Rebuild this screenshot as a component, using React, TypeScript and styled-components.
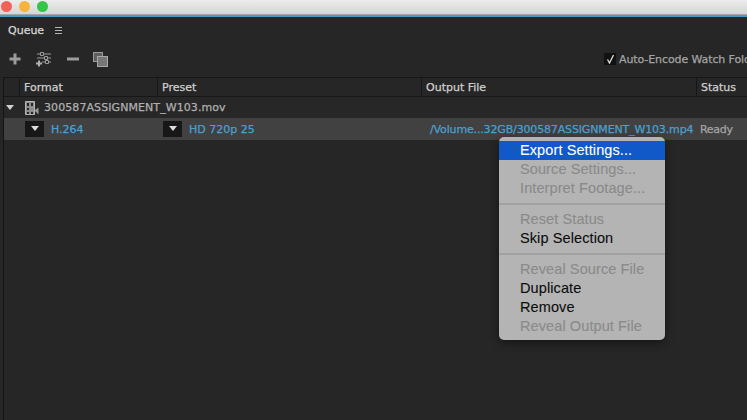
import React from 'react'
import styled, { createGlobalStyle } from 'styled-components'

const GlobalStyle = createGlobalStyle`
  html, body {
    margin: 0;
    padding: 0;
    background: #262626;
    overflow: hidden;
  }
  * {
    box-sizing: border-box;
  }
`

const Window = styled.div`
  position: relative;
  width: 747px;
  height: 420px;
  overflow: hidden;
  display: flex;
  flex-direction: column;
  background: #262626;
  font-family: 'DejaVu Sans', 'Liberation Sans', sans-serif;
  -webkit-text-stroke: 0.25px currentColor;
`

const TitleBar = styled.div`
  flex: 0 0 15px;
  display: flex;
  align-items: flex-start;
  gap: 7px;
  padding: 1px 0 0 1px;
  background: linear-gradient(#ececec, #d6d6d6);
  border-bottom: 1px solid #a8a8a8;
  overflow: hidden;
`

const TrafficLight = styled.span<{ $color: string }>`
  width: 11px;
  height: 11px;
  border-radius: 50%;
  background: ${(p) => p.$color};
`

const AccentLine = styled.div`
  flex: 0 0 2px;
  background: #4b9ac4;
`

const PanelHeader = styled.div`
  flex: 0 0 27px;
  display: flex;
  align-items: center;
  gap: 11px;
  padding: 0 0 0 8px;
`

const PanelTitle = styled.span`
  font-size: 11px;
  color: #d8d8d8;
`

const Toolbar = styled.div`
  flex: 0 0 33px;
  display: flex;
  align-items: center;
  padding: 0 0 3px 9px;
`

const ToolButton = styled.span<{ $width: number }>`
  display: flex;
  width: ${(p) => p.$width}px;
`

const WatchOption = styled.label`
  display: flex;
  align-items: center;
  gap: 3px;
  margin-left: auto;
  width: 143px;
  flex-shrink: 0;
  font-size: 11px;
  letter-spacing: -0.1px;
  white-space: nowrap;
  color: #a4a4a4;
  overflow: hidden;
`

const CheckBox = styled.span`
  flex: 0 0 12px;
  height: 12px;
  display: flex;
  align-items: center;
  justify-content: center;
  background: #111;
`

const Table = styled.div`
  flex: 1;
  margin-left: 3px;
  border-left: 1px solid #151515;
  display: flex;
  flex-direction: column;
`

const HeaderRow = styled.div`
  flex: 0 0 20px;
  display: flex;
  border-top: 1px solid #171717;
  border-bottom: 1px solid #171717;
`

const HeaderCell = styled.div<{ $width: number }>`
  flex: 0 0 ${(p) => p.$width}px;
  display: flex;
  align-items: center;
  padding-left: 4px;
  font-size: 11px;
  color: #d0d0d0;
  border-left: 1px solid #171717;
  &:first-child {
    border-left: 0;
    padding-left: 0;
  }
`

const GroupRow = styled.div`
  flex: 0 0 21px;
  display: flex;
  align-items: center;
  padding-left: 2px;
  font-size: 11px;
  letter-spacing: 0.08px;
  color: #b0b0b0;
  background: #272727;
`

const Disclosure = styled.span`
  width: 0;
  height: 0;
  margin-right: 11px;
  border-left: 4px solid transparent;
  border-right: 4px solid transparent;
  border-top: 5px solid #cfcfcf;
`

const FilmIcon = styled.span`
  display: flex;
  margin-right: 5px;
`

const QueueRow = styled.div`
  flex: 0 0 22px;
  display: flex;
  align-items: center;
  background: #414141;
  font-size: 11px;
`

const ItemCell = styled.div<{ $width: number; $inset: number }>`
  flex: 0 0 ${(p) => p.$width}px;
  display: flex;
  align-items: center;
  gap: 7px;
  padding-left: ${(p) => p.$inset}px;
  white-space: nowrap;
`

const Dropdown = styled.span`
  flex: 0 0 19px;
  height: 16px;
  display: flex;
  align-items: center;
  justify-content: center;
  background: #171717;
  &::after {
    content: '';
    border-left: 4.5px solid transparent;
    border-right: 4.5px solid transparent;
    border-top: 5px solid #dcdcdc;
    margin-bottom: 1px;
  }
`

const LinkText = styled.span<{ $tight?: boolean }>`
  color: #4ba0d0;
  letter-spacing: ${(p) => (p.$tight ? '-0.15px' : '0')};
`

const StatusText = styled.span`
  color: #a4a4a4;
  letter-spacing: -0.3px;
`

const ContextMenu = styled.div`
  position: absolute;
  left: 499px;
  top: 137px;
  width: 166px;
  height: 203px;
  padding: 4px 0;
  background: #b4b4b4;
  border-radius: 5px;
  box-shadow: 0 3px 10px rgba(0, 0, 0, 0.45);
  font-size: 14.5px;
  letter-spacing: 0.1px;
  font-family: 'Liberation Sans', Arial, sans-serif;
  -webkit-text-stroke: 0.1px currentColor;
`

const MenuItem = styled.div<{ $disabled?: boolean; $active?: boolean }>`
  height: 19px;
  line-height: 18px;
  padding-left: 21px;
  white-space: nowrap;
  color: ${(p) => (p.$active ? '#fff' : p.$disabled ? '#8a8a8a' : '#0c0c0c')};
  background: ${(p) => (p.$active ? '#1158c8' : 'transparent')};
`

const MenuSeparator = styled.div`
  height: 2px;
  margin: 5px 0;
  background: #a2a2a2;
`

const App: React.FC = () => {
  return (
    <>
      <GlobalStyle />
      <Window>
        <TitleBar>
          <TrafficLight $color="#f4605a" />
          <TrafficLight $color="#f5b53c" />
          <TrafficLight $color="#35c44a" />
        </TitleBar>
        <AccentLine />
        <PanelHeader>
          <PanelTitle>Queue</PanelTitle>
          <svg width="7" height="8" viewBox="0 0 7 8">
            <path d="M0 .5h7M0 3.5h7M0 6.5h7" stroke="#b5b5b5" strokeWidth="1" />
          </svg>
        </PanelHeader>
        <Toolbar>
          <ToolButton $width={27}>
            <svg width="12" height="12" viewBox="0 0 12 12">
              <path d="M6 .5v11M.5 6h11" stroke="#9c9c9c" strokeWidth="3" />
            </svg>
          </ToolButton>
          <ToolButton $width={31}>
            <svg width="16" height="15" viewBox="0 0 16 15">
              <path d="M1 2h14M1 6h14M6 10h9" stroke="#9c9c9c" strokeWidth="1" />
              <path d="M4.5 .5h3v3h-3zM8.5 4.5h3v3h-3zM9.5 8.5h3v3h-3z" fill="#262626" stroke="#9c9c9c" />
              <path d="M3 8.5v6M0 11.5h6" stroke="#b0b0b0" strokeWidth="2" />
            </svg>
          </ToolButton>
          <ToolButton $width={26}>
            <svg width="12" height="4" viewBox="0 0 12 4">
              <path d="M0 2h12" stroke="#9c9c9c" strokeWidth="3" />
            </svg>
          </ToolButton>
          <ToolButton $width={20}>
            <svg width="15" height="15" viewBox="0 0 15 15">
              <rect x=".5" y=".5" width="9" height="9" fill="#5e5e5e" stroke="#9c9c9c" />
              <rect x="4.5" y="4.5" width="10" height="10" fill="#777" stroke="#a8a8a8" />
            </svg>
          </ToolButton>
          <WatchOption>
            <CheckBox>
              <svg width="9" height="10" viewBox="0 0 9 10">
                <path d="M1.5 5.5 3.5 9 7.5 1" fill="none" stroke="#e0e0e0" strokeWidth="1.3" />
              </svg>
            </CheckBox>
            Auto-Encode Watch Folders
          </WatchOption>
        </Toolbar>
        <Table>
          <HeaderRow>
            <HeaderCell $width={15} />
            <HeaderCell $width={138}>Format</HeaderCell>
            <HeaderCell $width={264}>Preset</HeaderCell>
            <HeaderCell $width={275}>Output File</HeaderCell>
            <HeaderCell $width={51}>Status</HeaderCell>
          </HeaderRow>
          <GroupRow>
            <Disclosure />
            <FilmIcon>
              <svg width="14" height="14" viewBox="0 0 14 14">
                <path d="M.5.5h9v13h-9z" fill="#8d8d8d" stroke="#b5b5b5" />
                <path d="M2 2h2v3H2zM6 2h2v3H6zM2 7h2v2H2zM2 11h2v2H2zM6 11h2v2H6z" fill="#262626" />
                <path d="M9.5 9.5 13.5 6.5v7z" fill="#999" />
              </svg>
            </FilmIcon>
            300587ASSIGNMENT_W103.mov
          </GroupRow>
          <QueueRow>
            <ItemCell $width={157} $inset={21}>
              <Dropdown />
              <LinkText>H.264</LinkText>
            </ItemCell>
            <ItemCell $width={264} $inset={2}>
              <Dropdown />
              <LinkText>HD 720p 25</LinkText>
            </ItemCell>
            <ItemCell $width={275} $inset={5}>
              <LinkText $tight>/Volume...32GB/300587ASSIGNMENT_W103.mp4</LinkText>
            </ItemCell>
            <ItemCell $width={47} $inset={0}>
              <StatusText>Ready</StatusText>
            </ItemCell>
          </QueueRow>
        </Table>
        <ContextMenu>
          <MenuItem $active>Export Settings...</MenuItem>
          <MenuItem $disabled>Source Settings...</MenuItem>
          <MenuItem $disabled>Interpret Footage...</MenuItem>
          <MenuSeparator />
          <MenuItem $disabled>Reset Status</MenuItem>
          <MenuItem>Skip Selection</MenuItem>
          <MenuSeparator />
          <MenuItem $disabled>Reveal Source File</MenuItem>
          <MenuItem>Duplicate</MenuItem>
          <MenuItem>Remove</MenuItem>
          <MenuItem $disabled>Reveal Output File</MenuItem>
        </ContextMenu>
      </Window>
    </>
  )
}

export default App
